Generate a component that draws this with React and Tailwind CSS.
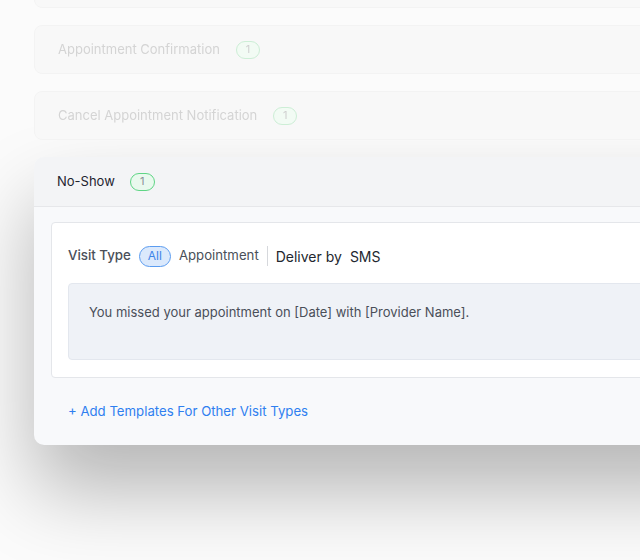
export default function App() {
  const faded = ["", "Appointment Confirmation", "Cancel Appointment Notification"];

  return (
    <div className="h-[560px] w-[640px] overflow-hidden bg-[#fbfbfb] font-['Inter',sans-serif]">
      <div className="-mt-[41px] flex flex-col gap-[17px] pl-[34px]">
        {faded.map((title, i) => (
          <div
            key={i}
            className="flex h-[49px] w-[700px] items-center gap-4 rounded-lg border border-[#f3f3f3] bg-[#f8f8f8] pl-[23px] blur-[0.7px]"
          >
            {title && (
              <>
                <span className="text-[13px] text-[#d4d4d4]">{title}</span>
                <span className="flex h-[18px] w-[24px] items-center justify-center rounded-full border border-[#cdeed6] bg-[#f2fbf4] text-[11px] text-[#d0d0d0]">
                  1
                </span>
              </>
            )}
          </div>
        ))}

        <div className="w-[700px] rounded-[10px] bg-[#f8f9fb] shadow-[0_45px_80px_rgba(0,0,0,0.28)]">
          <div className="flex h-[50px] items-center gap-[15px] rounded-t-[10px] border-b border-[#e6e7ea] bg-[#f3f4f6] pl-[23px]">
            <span className="text-[13px] text-[#1f2430]">No-Show</span>
            <span className="flex h-[18px] w-[25px] items-center justify-center rounded-full border border-[#5fd585] bg-[#e9f9ee] text-[11px] text-[#8a8f98]">
              1
            </span>
          </div>

          <div className="pl-[17px] pr-4 pt-[15px]">
            <div className="rounded border border-[#e4e6ea] bg-white px-4 pb-[17px] pt-[22px]">
              <div className="flex h-[22px] items-center">
                <span className="text-[13.3px] font-medium text-[#4a4f59]">Visit Type</span>
                <span className="ml-[8px] flex h-[21px] w-[32px] items-center justify-center rounded-full border border-[#5b9cf0] bg-[#dbe9fc] text-[12px] text-[#3d83e8]">
                  All
                </span>
                <span className="ml-[8px] text-[13.2px] text-[#4a4f59]">Appointment</span>
                <span className="ml-[8px] h-[20px] w-px bg-[#d6d8dc]" />
                <span className="ml-[8px] text-[14px] text-[#23272f]">Deliver by</span>
                <span className="ml-[8px] text-[14px] text-[#23272f]">SMS</span>
              </div>
              <div className="mt-[16px] h-[77px] rounded border border-[#e3e7ee] bg-[#eff2f7] px-5 pt-[19px]">
                <p className="text-[13px] text-[#4a4f59]">
                  You missed your appointment on [Date] with [Provider Name].
                </p>
              </div>
            </div>
          </div>

          <div className="h-[67px] pl-[34px] pt-[20px]">
            <span className="text-[13.2px] text-[#2f7ff0]">
              + Add Templates For Other Visit Types
            </span>
          </div>
        </div>
      </div>
    </div>
  );
}
